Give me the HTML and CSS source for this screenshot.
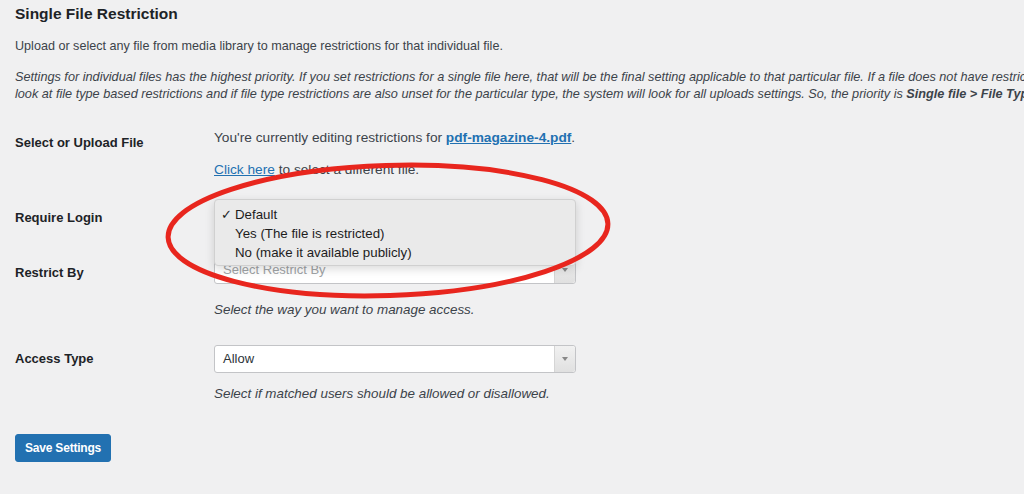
FILE: index.html
```html
<!DOCTYPE html>
<html lang="en">
<head>
  <meta charset="UTF-8">
  <meta name="viewport" content="width=device-width, initial-scale=1.0">
  <title>Single File Restriction</title>
  <link rel="stylesheet" href="styles.css">
</head>
<body>
  <div class="wrap">
    <h2 class="title">Single File Restriction</h2>
    <p class="intro">Upload or select any file from media library to manage restrictions for that individual file.</p>
    <p class="note">Settings for individual files has the highest priority. If you set restrictions for a single file here, that will be the final setting applicable to that particular file. If a file does not have restrictions set, the system will<br>look at file type based restrictions and if file type restrictions are also unset for the particular type, the system will look for all uploads settings. So, the priority is <b>Single file &gt; File Type &gt; All Uploads</b>.</p>

    <form class="form-table">
      <div class="row row-file">
        <div class="label">Select or Upload File</div>
        <div class="field">
          <p>You're currently editing restrictions for <a href="#"><b>pdf-magazine-4.pdf</b></a>.</p>
          <p class="second"><a href="#">Click here</a> to select a different file.</p>
        </div>
      </div>

      <div class="row row-login">
        <div class="label label-mid">Require Login</div>
        <div class="field">
          <div class="select focused">
            <span class="value">Default</span>
            <span class="arrow"></span>
            <ul class="menu">
              <li class="checked"><span class="check">✓</span>Default</li>
              <li>Yes (The file is restricted)</li>
              <li>No (make it available publicly)</li>
            </ul>
          </div>
        </div>
      </div>

      <div class="row row-restrict">
        <div class="label label-mid">Restrict By</div>
        <div class="field">
          <div class="select">
            <span class="value placeholder">Select Restrict By</span>
            <span class="arrow"></span>
          </div>
          <p class="description">Select the way you want to manage access.</p>
        </div>
      </div>

      <div class="row row-access">
        <div class="label label-mid">Access Type</div>
        <div class="field">
          <div class="select">
            <span class="value">Allow</span>
            <span class="arrow"></span>
          </div>
          <p class="description">Select if matched users should be allowed or disallowed.</p>
        </div>
      </div>

      <button type="button" class="button-primary">Save Settings</button>
    </form>
  </div>

  <svg class="highlight" width="1024" height="494" viewBox="0 0 1024 494">
    <ellipse cx="388" cy="230.5" rx="220" ry="65" transform="rotate(-1.8 388 230.5)" fill="none" stroke="#e8261e" stroke-width="5"/>
  </svg>
</body>
</html>
```

FILE: styles.css
```css
body {
  margin: 0;
  padding: 0;
  background-color: #f0f0f1;
  color: #3c434a;
  font-family: "Liberation Sans", Arial, sans-serif;
  font-size: 13px;
  line-height: 18px;
  overflow: hidden;
  width: 1024px;
  height: 494px;
}
.wrap {
  padding: 0 0 0 15px;
  position: relative;
}
.title {
  margin: 0;
  padding-top: 5px;
  font-size: 15.5px;
  line-height: 18px;
  color: #1d2327;
}
.intro {
  margin: 14px 0 0;
  font-size: 12.6px;
}
.note {
  margin: 14px 0 0;
  font-size: 12.7px;
  font-style: italic;
  line-height: 17px;
  white-space: nowrap;
}
.note b {
  font-weight: bold;
}
a {
  color: #2271b1;
  text-decoration: underline;
}
.form-table {
  margin: 0;
}
.row {
  display: flex;
  align-items: flex-start;
}
.label {
  width: 199px;
  flex-shrink: 0;
  font-weight: bold;
  color: #1d2327;
}
.field {
  width: 362px;
}
.field p {
  margin: 0;
}
.row-file {
  margin-top: 20px;
}
.row-file .label {
  padding-top: 11px;
}
.row-file .field {
  padding-top: 6px;
  font-size: 13.7px;
  white-space: nowrap;
}
.field p.second {
  margin-top: 14px;
}
.label-mid {
  height: 28px;
  display: flex;
  align-items: center;
}
.row-login {
  margin-top: 25px;
}
.row-restrict {
  margin-top: 24px;
}
.row-restrict .label {
  padding-top: 3px;
}
.row-access {
  margin-top: 26px;
}
.select {
  position: relative;
  box-sizing: border-box;
  height: 28px;
  background: #fff;
  border: 1px solid #c3c4c7;
  border-radius: 3px;
  display: flex;
  align-items: center;
  padding-left: 8px;
  color: #2c3338;
}
.select.focused {
  border-color: #c3c4c7 #2271b1 #c3c4c7 #c3c4c7;
}
.placeholder {
  color: #a0a3a6;
}
.arrow {
  position: absolute;
  top: 0;
  right: 0;
  bottom: 0;
  width: 20px;
  background: linear-gradient(#f1f1f1, #e0e0e0);
  border-left: 1px solid #d5d5d5;
  border-radius: 0 3px 3px 0;
}
.arrow::after {
  content: "";
  position: absolute;
  top: 11px;
  left: 7px;
  border-left: 3px solid transparent;
  border-right: 3px solid transparent;
  border-top: 4px solid #888;
}
.menu {
  position: absolute;
  top: -6px;
  left: -1px;
  width: 362px;
  box-sizing: border-box;
  margin: 0;
  padding: 5px 0 3px;
  list-style: none;
  background: #eaeaea;
  border: 1px solid #d0d0d0;
  border-radius: 4px;
  box-shadow: 0 3px 10px rgba(0, 0, 0, 0.15);
  color: #1d1d1d;
  font-size: 13.3px;
  z-index: 2;
}
.menu li {
  line-height: 19px;
  padding-left: 20px;
  position: relative;
}
.menu .check {
  position: absolute;
  left: 6px;
}
.description {
  font-style: italic;
  font-size: 13.4px;
  white-space: nowrap;
  margin-top: 17px !important;
}
.row-access .description {
  margin-top: 12px !important;
}
.button-primary {
  margin-top: 31px;
  height: 28px;
  padding: 0 9px;
  background: #2271b1;
  border: 1px solid #2271b1;
  border-radius: 3px;
  color: #fff;
  font-family: "Liberation Sans", Arial, sans-serif;
  font-size: 12px;
  letter-spacing: -0.2px;
  font-weight: bold;
}
.highlight {
  position: absolute;
  top: 0;
  left: 0;
  pointer-events: none;
  z-index: 3;
}
```
